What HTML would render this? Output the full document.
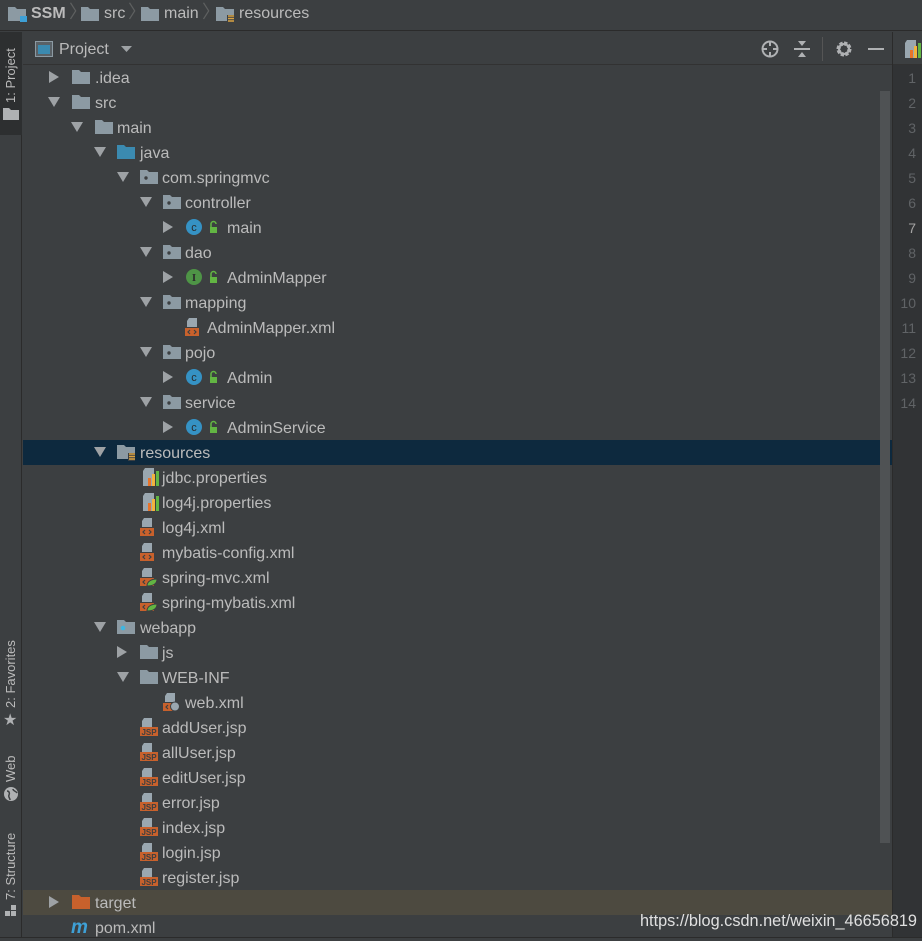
<!DOCTYPE html>
<html><head><meta charset="utf-8"><style>
*{margin:0;padding:0;box-sizing:border-box}
body{width:922px;height:941px;background:#3c3f41;font-family:"Liberation Sans","DejaVu Sans",sans-serif;color:#bbbbbb;position:relative;overflow:hidden}
.a{position:absolute}
.t{position:absolute;font-size:16px;line-height:25px;white-space:nowrap;margin-top:1px}
.row{position:absolute;left:23px;width:869px;height:25px}
svg{position:absolute;overflow:visible}
.vt{position:absolute;transform:rotate(-90deg);transform-origin:left top;font-size:13px;color:#bbbbbb;white-space:nowrap}
.ln{position:absolute;right:6px;font-size:14px;color:#606366;line-height:25px}
</style></head><body>
<svg width="0" height="0" style="position:absolute">
<defs>
<symbol id="fold" viewBox="0 0 18 14"><path d="M0 0h7l2 2h9v12H0z" fill="#8c9aa3"/></symbol>
<symbol id="foldb" viewBox="0 0 18 14"><path d="M0 0h7l2 2h9v12H0z" fill="#3b8ab0"/></symbol>
<symbol id="foldo" viewBox="0 0 18 14"><path d="M0 0h7l2 2h9v12H0z" fill="#c8612c"/></symbol>
<symbol id="pkg" viewBox="0 0 18 14"><path d="M0 0h7l2 2h9v12H0z" fill="#8c9aa3"/><circle cx="6" cy="8" r="1.7" fill="#3c3f41"/></symbol>
<symbol id="web" viewBox="0 0 18 14"><path d="M0 0h7l2 2h9v12H0z" fill="#8c9aa3"/><circle cx="6" cy="8" r="2.3" fill="#40b6e0"/></symbol>
<symbol id="res" viewBox="0 0 18 16"><path d="M0 0h7l2 2h9v12H0z" fill="#8c9aa3"/><rect x="11" y="8" width="7" height="8" fill="#3c3f41"/><path d="M12 9h6M12 11.5h6M12 14h6" stroke="#d9a343" stroke-width="1.5"/></symbol>
<symbol id="cls" viewBox="0 0 40 16"><circle cx="8" cy="8" r="8" fill="#3592c4"/><text x="8" y="12" font-size="11" text-anchor="middle" fill="#2b2b2b" font-family="Liberation Sans">c</text><rect x="24" y="8" width="7" height="6" fill="#62b543"/><path d="M25 8V5a2.5 2.5 0 0 1 5 0" stroke="#62b543" stroke-width="1.5" fill="none"/></symbol>
<symbol id="intf" viewBox="0 0 40 16"><circle cx="8" cy="8" r="8" fill="#4e9446"/><text x="8" y="12" font-size="11" text-anchor="middle" fill="#2b2b2b" font-family="Liberation Serif" font-weight="bold">I</text><rect x="24" y="8" width="7" height="6" fill="#62b543"/><path d="M25 8V5a2.5 2.5 0 0 1 5 0" stroke="#62b543" stroke-width="1.5" fill="none"/></symbol>
<symbol id="xml" viewBox="0 0 18 18"><path d="M4 0h8v9H2V3z" fill="#9aa7b0"/><rect x="0" y="10" width="14" height="8" fill="#c8612c"/><path d="M5 12l-2 2 2 2M9 12l2 2-2 2" stroke="#3c3f41" stroke-width="1.2" fill="none"/></symbol>
<symbol id="spx" viewBox="0 0 18 18"><path d="M4 0h8v9H2V3z" fill="#9aa7b0"/><rect x="0" y="10" width="14" height="8" fill="#c8612c"/><path d="M5 12l-2 2 2 2" stroke="#3c3f41" stroke-width="1.2" fill="none"/><path d="M7 18c0-5 5-7 10-7c0 5-4 7-10 7z" fill="#62b543" stroke="#3c3f41"/></symbol>
<symbol id="wxml" viewBox="0 0 18 18"><path d="M4 0h8v9H2V3z" fill="#9aa7b0"/><rect x="0" y="10" width="14" height="8" fill="#c8612c"/><path d="M5 12l-2 2 2 2" stroke="#3c3f41" stroke-width="1.2" fill="none"/><circle cx="12" cy="13.5" r="4.5" fill="#9aa7b0" stroke="#3c3f41"/></symbol>
<symbol id="prop" viewBox="0 0 18 18"><path d="M4 0h9v18H2V3z" fill="#9aa7b0"/><rect x="7" y="10" width="3" height="8" fill="#e8742a"/><rect x="11" y="6" width="3" height="12" fill="#f2b33d"/><rect x="15" y="3" width="3" height="15" fill="#62b543"/></symbol>
<symbol id="jsp" viewBox="0 0 18 18"><path d="M4 0h8v9H2V3z" fill="#9aa7b0"/><rect x="0" y="9" width="18" height="9" fill="#c8612c"/><text x="9" y="17" font-size="8" text-anchor="middle" fill="#3c3f41" font-family="Liberation Sans" font-weight="bold">JSP</text></symbol>
<symbol id="ar" viewBox="0 0 10 12"><path d="M0 0l10 6-10 6z" fill="#9ea2a5"/></symbol>
<symbol id="ad" viewBox="0 0 12 10"><path d="M0 0h12l-6 10z" fill="#9ea2a5"/></symbol>
</defs></svg>

<!-- breadcrumb -->
<div class="a" style="left:0;top:0;width:922px;height:31px;border-bottom:1px solid #2b2b2b;background:#3c3f41"></div>
<svg style="left:8px;top:7px" width="19" height="15"><use href="#fold" width="18" height="14"/><rect x="12" y="9" width="7" height="6" fill="#3ea0d6"/></svg>
<div class="t" style="left:31px;top:0;font-weight:bold;color:#bbbbbb">SSM</div>
<div class="t" style="left:69px;top:-1px;color:#5e6060;font-size:18px">〉</div>
<svg style="left:81px;top:7px" width="18" height="14"><use href="#fold" width="18" height="14"/></svg>
<div class="t" style="left:104px;top:0">src</div>
<div class="t" style="left:128px;top:-1px;color:#5e6060;font-size:18px">〉</div>
<svg style="left:141px;top:7px" width="18" height="14"><use href="#fold" width="18" height="14"/></svg>
<div class="t" style="left:164px;top:0">main</div>
<div class="t" style="left:202px;top:-1px;color:#5e6060;font-size:18px">〉</div>
<svg style="left:216px;top:7px" width="18" height="16"><use href="#res" width="18" height="16"/></svg>
<div class="t" style="left:239px;top:0">resources</div>

<!-- left strip -->
<div class="a" style="left:0;top:32px;width:22px;height:909px;background:#3c3f41;border-right:1px solid #2b2b2b"></div>
<div class="a" style="left:0;top:32px;width:22px;height:103px;background:#2d2f30"></div>
<div class="vt" style="left:3px;top:103px">1: Project</div>
<svg style="left:3px;top:108px" width="16" height="12"><path d="M0 0h6l2 2h8v10H0z" fill="#afb1b3"/></svg>
<div class="vt" style="left:3px;top:708px">2: Favorites</div>
<div class="a" style="left:3px;top:710px;font-size:16px;color:#afb1b3">★</div>
<div class="vt" style="left:3px;top:782px">Web</div>
<svg style="left:4px;top:787px" width="14" height="14"><circle cx="7" cy="7" r="7" fill="#afb1b3"/><path d="M3 4c2 0 3 2 2 4s1 3 1 5M9 2c0 2 3 2 4 4" stroke="#3c3f41" stroke-width="1.5" fill="none"/></svg>
<div class="vt" style="left:3px;top:900px">7: Structure</div>
<svg style="left:5px;top:905px" width="12" height="12"><rect x="0" y="6" width="5" height="5" fill="#afb1b3"/><rect x="6" y="6" width="5" height="5" fill="#afb1b3"/><rect x="6" y="0" width="5" height="5" fill="#afb1b3"/></svg>

<!-- panel header -->
<div class="a" style="left:23px;top:32px;width:870px;height:33px;border-bottom:1px solid #323232"></div>
<svg style="left:35px;top:41px" width="18" height="16"><rect x="0.5" y="0.5" width="17" height="15" fill="#5a6166" stroke="#8c9aa3"/><rect x="3" y="4" width="12" height="9" fill="#3b8ab0"/></svg>
<div class="t" style="left:59px;top:36px">Project</div>
<svg style="left:121px;top:46px" width="11" height="7"><path d="M0 0h11l-5.5 6z" fill="#9ea2a5"/></svg>
<svg style="left:761px;top:40px" width="18" height="18"><circle cx="9" cy="9" r="7.5" stroke="#afb1b3" stroke-width="2" fill="none"/><path d="M9 1v5M9 12v5M1 9h5M12 9h5" stroke="#afb1b3" stroke-width="2"/></svg>
<svg style="left:793px;top:40px" width="18" height="18"><path d="M1 9h16" stroke="#afb1b3" stroke-width="2"/><path d="M5 1h8l-4 5z M5 17h8l-4-5z" fill="#afb1b3"/></svg>
<div class="a" style="left:822px;top:37px;width:1px;height:24px;background:#555"></div>
<svg style="left:835px;top:40px" width="18" height="18"><circle cx="9" cy="9" r="5.5" stroke="#afb1b3" stroke-width="4" fill="none" stroke-dasharray="3 1.3"/><circle cx="9" cy="9" r="5" stroke="#afb1b3" stroke-width="2" fill="none"/></svg>
<div class="a" style="left:868px;top:48px;width:16px;height:2px;background:#afb1b3"></div>

<!-- right gutter -->
<div class="a" style="left:892px;top:32px;width:30px;height:909px;background:#313335;border-left:1px solid #2b2b2b"></div>
<div class="a" style="left:893px;top:32px;width:29px;height:33px;background:#3c3f41;border-bottom:1px solid #323232"></div>
<svg style="left:903px;top:40px" width="19" height="18"><use href="#prop" width="18" height="18"/></svg>
<div class="a" style="left:893px;top:66px;width:29px;height:360px">
<div class="ln" style="top:0">1</div><div class="ln" style="top:25px">2</div><div class="ln" style="top:50px">3</div><div class="ln" style="top:75px">4</div><div class="ln" style="top:100px">5</div><div class="ln" style="top:125px">6</div><div class="ln" style="top:150px;color:#a4a3a3">7</div><div class="ln" style="top:175px">8</div><div class="ln" style="top:200px">9</div><div class="ln" style="top:225px">10</div><div class="ln" style="top:250px">11</div><div class="ln" style="top:275px">12</div><div class="ln" style="top:300px">13</div><div class="ln" style="top:325px">14</div>
</div>

<!-- highlights -->
<div class="row" style="top:440px;background:#0d293e"></div>
<div class="row" style="top:890px;background:#4d4a40"></div>
<!-- scrollbar -->
<div class="a" style="left:880px;top:91px;width:10px;height:752px;background:#4f5254"></div>

<!-- tree -->
<svg style="left:49px;top:71px" width="10" height="12"><use href="#ar" width="10" height="12"/></svg>
<svg style="left:72px;top:70px" width="18" height="14"><use href="#fold" width="18" height="14"/></svg>
<div class="t" style="left:95px;top:65px">.idea</div>

<svg style="left:48px;top:97px" width="12" height="10"><use href="#ad" width="12" height="10"/></svg>
<svg style="left:72px;top:95px" width="18" height="14"><use href="#fold" width="18" height="14"/></svg>
<div class="t" style="left:95px;top:90px">src</div>

<svg style="left:71px;top:122px" width="12" height="10"><use href="#ad" width="12" height="10"/></svg>
<svg style="left:95px;top:120px" width="18" height="14"><use href="#fold" width="18" height="14"/></svg>
<div class="t" style="left:117px;top:115px">main</div>

<svg style="left:94px;top:147px" width="12" height="10"><use href="#ad" width="12" height="10"/></svg>
<svg style="left:117px;top:145px" width="18" height="14"><use href="#foldb" width="18" height="14"/></svg>
<div class="t" style="left:140px;top:140px">java</div>

<svg style="left:117px;top:172px" width="12" height="10"><use href="#ad" width="12" height="10"/></svg>
<svg style="left:140px;top:170px" width="18" height="14"><use href="#pkg" width="18" height="14"/></svg>
<div class="t" style="left:162px;top:165px">com.springmvc</div>

<svg style="left:140px;top:197px" width="12" height="10"><use href="#ad" width="12" height="10"/></svg>
<svg style="left:163px;top:195px" width="18" height="14"><use href="#pkg" width="18" height="14"/></svg>
<div class="t" style="left:185px;top:190px">controller</div>

<svg style="left:163px;top:221px" width="10" height="12"><use href="#ar" width="10" height="12"/></svg>
<svg style="left:186px;top:219px" width="40" height="16"><use href="#cls" width="40" height="16"/></svg>
<div class="t" style="left:227px;top:215px">main</div>

<svg style="left:140px;top:247px" width="12" height="10"><use href="#ad" width="12" height="10"/></svg>
<svg style="left:163px;top:245px" width="18" height="14"><use href="#pkg" width="18" height="14"/></svg>
<div class="t" style="left:185px;top:240px">dao</div>

<svg style="left:163px;top:271px" width="10" height="12"><use href="#ar" width="10" height="12"/></svg>
<svg style="left:186px;top:269px" width="40" height="16"><use href="#intf" width="40" height="16"/></svg>
<div class="t" style="left:227px;top:265px">AdminMapper</div>

<svg style="left:140px;top:297px" width="12" height="10"><use href="#ad" width="12" height="10"/></svg>
<svg style="left:163px;top:295px" width="18" height="14"><use href="#pkg" width="18" height="14"/></svg>
<div class="t" style="left:185px;top:290px">mapping</div>

<svg style="left:185px;top:318px" width="18" height="18"><use href="#xml" width="18" height="18"/></svg>
<div class="t" style="left:207px;top:315px">AdminMapper.xml</div>

<svg style="left:140px;top:347px" width="12" height="10"><use href="#ad" width="12" height="10"/></svg>
<svg style="left:163px;top:345px" width="18" height="14"><use href="#pkg" width="18" height="14"/></svg>
<div class="t" style="left:185px;top:340px">pojo</div>

<svg style="left:163px;top:371px" width="10" height="12"><use href="#ar" width="10" height="12"/></svg>
<svg style="left:186px;top:369px" width="40" height="16"><use href="#cls" width="40" height="16"/></svg>
<div class="t" style="left:227px;top:365px">Admin</div>

<svg style="left:140px;top:397px" width="12" height="10"><use href="#ad" width="12" height="10"/></svg>
<svg style="left:163px;top:395px" width="18" height="14"><use href="#pkg" width="18" height="14"/></svg>
<div class="t" style="left:185px;top:390px">service</div>

<svg style="left:163px;top:421px" width="10" height="12"><use href="#ar" width="10" height="12"/></svg>
<svg style="left:186px;top:419px" width="40" height="16"><use href="#cls" width="40" height="16"/></svg>
<div class="t" style="left:227px;top:415px">AdminService</div>

<svg style="left:94px;top:447px" width="12" height="10"><use href="#ad" width="12" height="10"/></svg>
<svg style="left:117px;top:445px" width="18" height="16"><use href="#res" width="18" height="16"/></svg>
<div class="t" style="left:140px;top:440px">resources</div>

<svg style="left:141px;top:468px" width="18" height="18"><use href="#prop" width="18" height="18"/></svg>
<div class="t" style="left:162px;top:465px">jdbc.properties</div>
<svg style="left:141px;top:493px" width="18" height="18"><use href="#prop" width="18" height="18"/></svg>
<div class="t" style="left:162px;top:490px">log4j.properties</div>
<svg style="left:140px;top:518px" width="18" height="18"><use href="#xml" width="18" height="18"/></svg>
<div class="t" style="left:162px;top:515px">log4j.xml</div>
<svg style="left:140px;top:543px" width="18" height="18"><use href="#xml" width="18" height="18"/></svg>
<div class="t" style="left:162px;top:540px">mybatis-config.xml</div>
<svg style="left:140px;top:568px" width="18" height="18"><use href="#spx" width="18" height="18"/></svg>
<div class="t" style="left:162px;top:565px">spring-mvc.xml</div>
<svg style="left:140px;top:593px" width="18" height="18"><use href="#spx" width="18" height="18"/></svg>
<div class="t" style="left:162px;top:590px">spring-mybatis.xml</div>

<svg style="left:94px;top:622px" width="12" height="10"><use href="#ad" width="12" height="10"/></svg>
<svg style="left:117px;top:620px" width="18" height="14"><use href="#web" width="18" height="14"/></svg>
<div class="t" style="left:140px;top:615px">webapp</div>

<svg style="left:117px;top:646px" width="10" height="12"><use href="#ar" width="10" height="12"/></svg>
<svg style="left:140px;top:645px" width="18" height="14"><use href="#fold" width="18" height="14"/></svg>
<div class="t" style="left:162px;top:640px">js</div>

<svg style="left:117px;top:672px" width="12" height="10"><use href="#ad" width="12" height="10"/></svg>
<svg style="left:140px;top:670px" width="18" height="14"><use href="#fold" width="18" height="14"/></svg>
<div class="t" style="left:162px;top:665px">WEB-INF</div>

<svg style="left:163px;top:693px" width="18" height="18"><use href="#wxml" width="18" height="18"/></svg>
<div class="t" style="left:185px;top:690px">web.xml</div>

<svg style="left:140px;top:718px" width="18" height="18"><use href="#jsp" width="18" height="18"/></svg>
<div class="t" style="left:162px;top:715px">addUser.jsp</div>
<svg style="left:140px;top:743px" width="18" height="18"><use href="#jsp" width="18" height="18"/></svg>
<div class="t" style="left:162px;top:740px">allUser.jsp</div>
<svg style="left:140px;top:768px" width="18" height="18"><use href="#jsp" width="18" height="18"/></svg>
<div class="t" style="left:162px;top:765px">editUser.jsp</div>
<svg style="left:140px;top:793px" width="18" height="18"><use href="#jsp" width="18" height="18"/></svg>
<div class="t" style="left:162px;top:790px">error.jsp</div>
<svg style="left:140px;top:818px" width="18" height="18"><use href="#jsp" width="18" height="18"/></svg>
<div class="t" style="left:162px;top:815px">index.jsp</div>
<svg style="left:140px;top:843px" width="18" height="18"><use href="#jsp" width="18" height="18"/></svg>
<div class="t" style="left:162px;top:840px">login.jsp</div>
<svg style="left:140px;top:868px" width="18" height="18"><use href="#jsp" width="18" height="18"/></svg>
<div class="t" style="left:162px;top:865px">register.jsp</div>

<svg style="left:49px;top:896px" width="10" height="12"><use href="#ar" width="10" height="12"/></svg>
<svg style="left:72px;top:895px" width="18" height="14"><use href="#foldo" width="18" height="14"/></svg>
<div class="t" style="left:95px;top:890px">target</div>

<div class="t" style="left:71px;top:914px;color:#3ea0d6;font-style:italic;font-weight:bold;font-size:19px">m</div>
<div class="t" style="left:95px;top:915px">pom.xml</div>

<div class="a" style="left:0;top:937px;width:922px;height:4px;background:#3c3f41;border-top:1px solid #2b2b2b"></div>
<div class="t" style="left:640px;top:908px;color:#e0e0e0;font-size:16.3px">https://blog.csdn.net/weixin_46656819</div>
</body></html>
